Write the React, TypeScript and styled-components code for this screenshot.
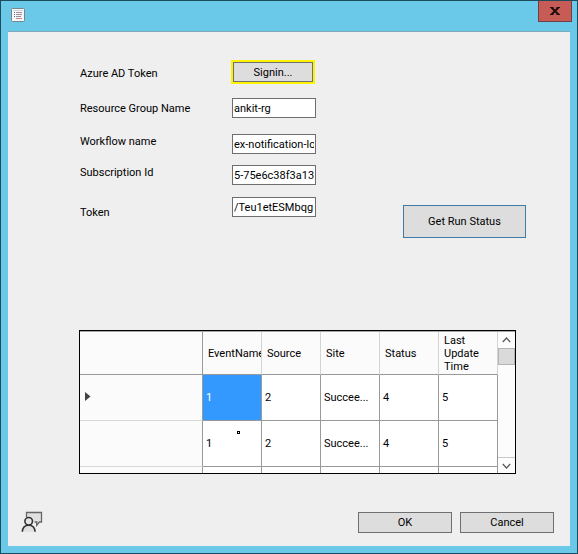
import React from 'react';
import styled, { createGlobalStyle } from 'styled-components';

const GlobalStyle = createGlobalStyle`
  *, *::before, *::after { box-sizing: border-box; }
  body { margin: 0; background: #6ac9e9; }
  body, button, input, table {
    font-family: Roboto, "Liberation Sans", Arial, sans-serif;
    font-size: 11px;
    line-height: 13px;
    color: #000;
  }
`;

const Window = styled.div`
  display: flex;
  flex-direction: column;
  min-height: 100vh;
  padding-bottom: 7px;
  border: 1px solid #1b4b5d;
  background: #6ac9e9;
`;

const TitleBar = styled.header`
  display: flex;
  align-items: flex-start;
  justify-content: space-between;
  height: 30px;
  padding: 0 5px 0 10px;
`;

const AppIcon = styled.svg`
  width: 14px;
  height: 14px;
  margin-top: 7px;
`;

const CloseButton = styled.button`
  display: grid;
  place-items: center;
  width: 34px;
  height: 21px;
  margin: 0;
  padding: 0;
  border: 1px solid #6f3f45;
  border-top: 0;
  background: #c75b55;
`;

const Client = styled.main`
  display: flex;
  flex: 1;
  flex-direction: column;
  margin: 0 7px;
  padding: 28px 16px 13px 13px;
  border-top: 1px solid #7fa9b8;
  background: #efefef;
`;

const Form = styled.form`
  display: flex;
  padding: 0 28px 0 59px;
`;

const Labels = styled.div`
  display: grid;
  grid-template-rows: 26px 44px 22px 40px 40px;
  align-items: center;
  width: 152px;
`;

const Fields = styled.div`
  display: grid;
  grid-template-rows: 38px 36px 31px 32px 20px;
  align-items: start;
  width: 84px;
`;

const TextField = styled.input`
  width: 100%;
  height: 20px;
  padding: 0 1px;
  border: 1px solid #6e6e6e;
  border-radius: 0;
  background: #fff;
`;

const PushButton = styled.button<{ $accent?: boolean }>`
  width: 94px;
  height: 21px;
  padding: 0;
  border: 1px solid ${({ $accent }) => ($accent ? '#3f7ba6' : '#707070')};
  background: #dddddd;
`;

const SigninButton = styled(PushButton)`
  width: 80px;
  height: 20px;
  margin: 2px 1px;
  outline: 2px solid #fff200;
`;

const RunButton = styled(PushButton)`
  width: 123px;
  height: 33px;
  margin-top: 145px;
  margin-left: auto;
`;

const GridFrame = styled.section`
  display: flex;
  height: 144px;
  margin: 92px 38px 0 58px;
  border: 1px solid #000;
  background: #fff;
`;

const TableClip = styled.div`
  flex: 1;
  min-width: 0;
  overflow: hidden;
  border-top: 1px solid #a8a8a8;
`;

const Table = styled.table`
  width: 100%;
  table-layout: fixed;
  border-collapse: separate;
  border-spacing: 0;
`;

const HeadCell = styled.th`
  width: 59px;
  height: 43px;
  padding: 0 0 0 5px;
  border-right: 1px solid #d4d4d4;
  border-bottom: 1px solid #999;
  background: #fbfbfb;
  font-weight: 400;
  text-align: left;
  vertical-align: middle;
  overflow: hidden;
`;

const CornerCell = styled(HeadCell)`
  width: auto;
  border-right-color: #999;
`;

const RowHead = styled.th`
  height: 46px;
  padding: 0 0 0 5px;
  border-right: 1px solid #999;
  border-bottom: 1px solid #d8d8d8;
  background: #fbfbfb;
  text-align: left;
`;

const Cell = styled.td<{ $selected?: boolean }>`
  position: relative;
  height: 46px;
  padding: 0 0 0 3px;
  border-right: 1px solid #999;
  border-bottom: 1px solid #999;
  background: ${({ $selected }) => ($selected ? '#3399ff' : '#fff')};
  color: ${({ $selected }) => ($selected ? '#fff' : '#000')};
  white-space: nowrap;
  overflow: hidden;
`;

const Pointer = styled.span`
  position: absolute;
  top: 10px;
  left: 34px;
  width: 3px;
  height: 3px;
  border: 1px solid #000;
  background: #fff;
`;

const ScrollBar = styled.div`
  display: flex;
  flex-direction: column;
  width: 17px;
  border-top: 1px solid #a8a8a8;
  background: #fcfcfc;
`;

const ScrollButton = styled.button`
  display: grid;
  place-items: center;
  height: 16px;
  margin: 0;
  padding: 0;
  border: 0;
  background: #fcfcfc;
`;

const LowerScrollButton = styled(ScrollButton)`
  margin-top: auto;
  border-top: 1px solid #c8c8c8;
`;

const ScrollThumb = styled.div`
  height: 17px;
  border: 1px solid #b4b4b4;
  background: #dadada;
`;

const Footer = styled.footer`
  display: flex;
  align-items: flex-end;
  gap: 8px;
  margin-top: auto;
`;

const FeedbackButton = styled.button`
  display: flex;
  margin: 0 auto 0 0;
  padding: 0;
  border: 0;
  background: none;
`;

const columns = ['EventName', 'Source', 'Site', 'Status', 'Last Update Time'];
const rows = [
  ['1', '2', 'Succee...', '4', '5'],
  ['1', '2', 'Succee...', '4', '5'],
  ['', '', '', '', ''],
];
const fields = [
  { id: 'resource-group', label: 'Resource Group Name', value: 'ankit-rg' },
  { id: 'workflow', label: 'Workflow name', value: 'ex-notification-log' },
  { id: 'subscription', label: 'Subscription Id', value: '5-75e6c38f3a13' },
  { id: 'token', label: 'Token', value: '/Teu1etESMbqg' },
];

const Chevron = ({ d }: { d: string }) => (
  <svg width="9" height="6" viewBox="0 0 9 6" fill="none" stroke="#555" strokeWidth="1.2" aria-hidden="true">
    <path d={d} />
  </svg>
);

export default function App() {
  return (
    <>
      <GlobalStyle />
      <Window>
        <TitleBar>
          <AppIcon viewBox="0 0 14 14" aria-hidden="true">
            <rect x=".5" y=".5" width="13" height="13" rx="1" fill="#f7f7f7" stroke="#77858c" />
            <path d="M2 2.5h10" stroke="#cdd3d6" />
            <path d="M5 4.5h6M5 6.5h6M5 8.5h5M5 10.5h6" stroke="#a08d9a" />
            <path d="M3 4.5h1M3 6.5h1M3 8.5h1" stroke="#536c9b" />
            <path d="M8 10.5h3" stroke="#c78b8b" />
          </AppIcon>
          <CloseButton type="button" aria-label="Close">
            <svg width="10" height="8" viewBox="0 0 10 8" aria-hidden="true">
              <path d="M1.5.5l7 7M8.5.5l-7 7" stroke="#210c0d" strokeWidth="2" />
              <path d="M0 .5h3.5M6.5.5H10M0 7.5h3.5M6.5 7.5H10" stroke="#210c0d" />
            </svg>
          </CloseButton>
        </TitleBar>
        <Client>
          <Form onSubmit={(e) => e.preventDefault()}>
            <Labels>
              <label htmlFor="signin">Azure AD Token</label>
              {fields.map((f) => (
                <label key={f.id} htmlFor={f.id}>{f.label}</label>
              ))}
            </Labels>
            <Fields>
              <SigninButton id="signin" type="button">Signin...</SigninButton>
              {fields.map((f) => (
                <TextField key={f.id} id={f.id} type="text" defaultValue={f.value} />
              ))}
            </Fields>
            <RunButton type="submit" $accent>Get Run Status</RunButton>
          </Form>
          <GridFrame>
            <TableClip>
              <Table>
                <thead>
                  <tr>
                    <CornerCell as="td" />
                    {columns.map((c) => (
                      <HeadCell key={c} scope="col">{c}</HeadCell>
                    ))}
                  </tr>
                </thead>
                <tbody>
                  {rows.map((row, r) => (
                    <tr key={r}>
                      <RowHead scope="row">
                        {r === 0 && (
                          <svg width="6" height="9" viewBox="0 0 6 9" aria-label="Current row">
                            <path d="M0 0v9l5.5-4.5z" fill="#444" />
                          </svg>
                        )}
                      </RowHead>
                      {row.map((value, c) => (
                        <Cell key={c} $selected={r === 0 && c === 0}>
                          {value}
                          {r === 1 && c === 0 && <Pointer />}
                        </Cell>
                      ))}
                    </tr>
                  ))}
                </tbody>
              </Table>
            </TableClip>
            <ScrollBar>
              <ScrollButton type="button" aria-label="Scroll up"><Chevron d="M.8 5l3.7-4 3.7 4" /></ScrollButton>
              <ScrollThumb />
              <LowerScrollButton type="button" aria-label="Scroll down"><Chevron d="M.8 1l3.7 4 3.7-4" /></LowerScrollButton>
            </ScrollBar>
          </GridFrame>
          <Footer>
            <FeedbackButton type="button" aria-label="Feedback">
              <svg width="22" height="22" viewBox="0 0 22 22" fill="none">
                <path d="M5.5 6V1.5h15v9.5h-2.2l-2.6 3.3V11h-2.2" fill="#e1e1e1" stroke="#666" strokeWidth="1.3" />
                <path d="M1.3 20.8c.3-4.3 2.7-6.6 6.4-6.6s6.1 2.3 6.4 6.6" fill="#e1e1e1" stroke="#333" strokeWidth="1.6" />
                <circle cx="7.7" cy="10.3" r="3.8" fill="#e6e6e6" stroke="#333" strokeWidth="1.6" />
              </svg>
            </FeedbackButton>
            <PushButton type="button">OK</PushButton>
            <PushButton type="button">Cancel</PushButton>
          </Footer>
        </Client>
      </Window>
    </>
  );
}
